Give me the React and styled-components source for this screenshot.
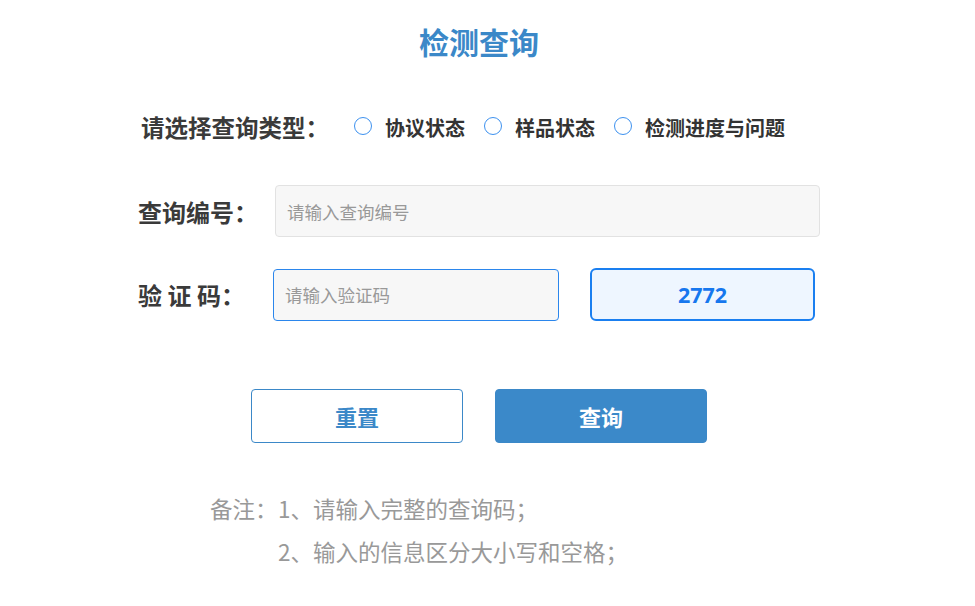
import React, { useState } from "react";
import styled, { createGlobalStyle } from "styled-components";

const GlobalStyle = createGlobalStyle`
  body {
    margin: 0;
    background: #fff;
    font-family: "Noto Sans CJK SC", "Noto Sans", sans-serif;
  }
`;

const types = ["协议状态", "样品状态", "检测进度与问题"];

export default function App() {
  const [type, setType] = useState("");
  const [code, setCode] = useState("");
  const [captcha, setCaptcha] = useState("");

  const handleReset = () => {
    setType("");
    setCode("");
    setCaptcha("");
  };

  return (
    <Page>
      <GlobalStyle />
      <Form>
        <Title>检测查询</Title>

        <TypeRow>
          <TypeLabel>请选择查询类型：</TypeLabel>
          {types.map((t) => (
            <Option key={t}>
              <Radio
                type="radio"
                name="type"
                checked={type === t}
                onChange={() => setType(t)}
              />
              {t}
            </Option>
          ))}
        </TypeRow>

        <Row>
          <Label>查询编号：</Label>
          <Input
            placeholder="请输入查询编号"
            value={code}
            onChange={(e) => setCode(e.target.value)}
          />
        </Row>

        <Row>
          <Label>验 证 码：</Label>
          <Input
            $active
            $width="286px"
            $shift="-2px"
            placeholder="请输入验证码"
            value={captcha}
            onChange={(e) => setCaptcha(e.target.value)}
          />
          <Captcha>2772</Captcha>
        </Row>

        <Buttons>
          <Button onClick={handleReset}>重置</Button>
          <Button $primary>查询</Button>
        </Buttons>

        <Notes>
          <NoteLine>
            <NoteHead>备注：</NoteHead>
            <span>1、请输入完整的查询码；</span>
          </NoteLine>
          <NoteLine>
            <NoteHead />
            <span>2、输入的信息区分大小写和空格；</span>
          </NoteLine>
        </Notes>
      </Form>
    </Page>
  );
}

const Page = styled.div`
  padding: 20px 0 30px 138px;
`;

const Form = styled.div`
  width: 682px;
  display: flex;
  flex-direction: column;
`;

const Title = styled.h1`
  margin: 0;
  text-align: center;
  font-size: 30px;
  line-height: 42px;
  font-weight: 700;
  color: #3b88c8;
`;

const TypeRow = styled.div`
  display: flex;
  align-items: center;
  margin-top: 45px;
  padding-left: 3px;
  height: 40px;
`;

const TypeLabel = styled.span`
  font-size: 23.5px;
  font-weight: 700;
  color: #3a3a3a;
  margin-right: 25px;
`;

const Option = styled.label`
  display: flex;
  align-items: center;
  font-size: 20px;
  font-weight: 700;
  color: #333;
  margin-right: 19px;
  cursor: pointer;
`;

const Radio = styled.input`
  appearance: none;
  width: 18px;
  height: 18px;
  margin: 0 13px 3px 0;
  border: 1px solid #3d91ef;
  border-radius: 50%;
  background: #fff;
  cursor: pointer;
  &:checked {
    border: 5px solid #3d91ef;
  }
`;

const Row = styled.div`
  display: flex;
  align-items: center;
  margin-top: 38px;
  &:nth-of-type(3) {
    margin-top: 31px;
  }
`;

const Label = styled.span`
  width: 137px;
  flex-shrink: 0;
  font-size: 24px;
  font-weight: 700;
  color: #3a3a3a;
  white-space: pre;
`;

const Input = styled.input`
  box-sizing: border-box;
  width: ${(p) => p.$width || "545px"};
  height: 52px;
  margin-left: ${(p) => p.$shift || "0"};
  padding: 0 11px;
  border: 1px solid ${(p) => (p.$active ? "#2b86ec" : "#e2e2e2")};
  border-radius: 4px;
  background: #f7f7f7;
  font-family: inherit;
  font-size: 17.5px;
  color: #333;
  outline: none;
  &::placeholder {
    color: #999;
  }
`;

const Captcha = styled.div`
  box-sizing: border-box;
  width: 225px;
  height: 53px;
  margin-left: 31px;
  display: flex;
  align-items: center;
  justify-content: center;
  border: 2px solid #1a7ff0;
  border-radius: 6px;
  background: #eef6ff;
  color: #1677ee;
  font-family: "Open Sans", "Noto Sans", sans-serif;
  font-size: 21.5px;
  font-weight: 700;
`;

const Buttons = styled.div`
  display: flex;
  justify-content: center;
  gap: 32px;
  margin-top: 68px;
`;

const Button = styled.button`
  box-sizing: border-box;
  width: 212px;
  height: 54px;
  border: 1px solid #3b88c8;
  border-radius: 4px;
  background: ${(p) => (p.$primary ? "#3b89c9" : "#fff")};
  color: ${(p) => (p.$primary ? "#fff" : "#3b88c8")};
  font-family: inherit;
  font-size: 22px;
  font-weight: 700;
  cursor: pointer;
`;

const Notes = styled.div`
  margin-top: 44px;
  padding-left: 72px;
  color: #999;
  font-size: 22.5px;
`;

const NoteLine = styled.div`
  display: flex;
  line-height: 43px;
`;

const NoteHead = styled.span`
  width: 68px;
  flex-shrink: 0;
`;
